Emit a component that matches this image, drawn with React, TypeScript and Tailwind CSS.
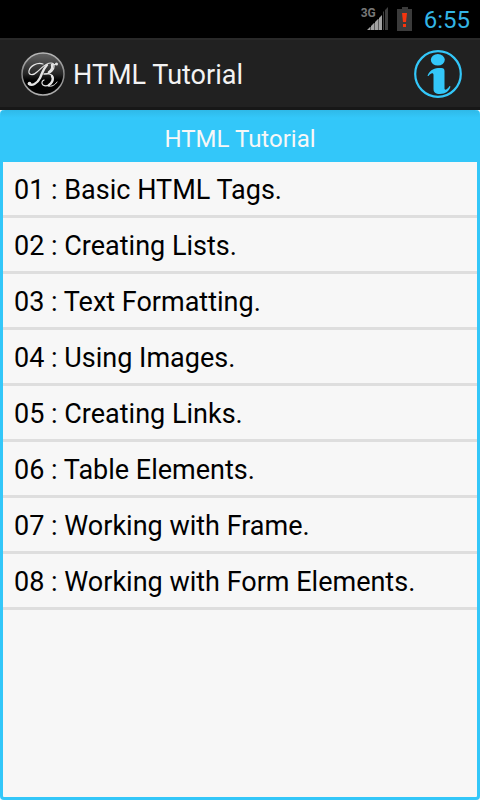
const lessons = [
  'Basic HTML Tags.',
  'Creating Lists.',
  'Text Formatting.',
  'Using Images.',
  'Creating Links.',
  'Table Elements.',
  'Working with Frame.',
  'Working with Form Elements.',
];

function SignalIcon() {
  return (
    <svg className="h-7 w-7" viewBox="0 0 28 28" aria-hidden="true">
      <path d="M6 25h3v-3zM10 25h3v-7l-3 3zM14 25h3V14l-3 3zM18 25h3V10l-3 3z" fill="#a3a3a3" />
      <path d="M9 22h1v3H9zM13 18h1v7h-1zM17 14h1v11h-1z" fill="#5c5c5c" />
      <path d="M22 25V7l1-1v19zM24 25V5l3-3v23z" fill="#3f3f3f" />
    </svg>
  );
}

function BatteryIcon() {
  return (
    <svg className="h-6 w-4" viewBox="0 0 16 24" aria-hidden="true">
      <path d="M5 0h6v2h4v22H0V2h5z" fill="#3b3b3b" />
      <path d="M5 6h5l-1 9H6z" fill="#f6350e" />
      <path d="M6 17h3v3H6z" fill="#f6350e" />
    </svg>
  );
}

// Round badge with a script monogram
function Logo() {
  return (
    <svg className="h-12 w-12" viewBox="0 0 48 48" fill="none" aria-hidden="true">
      <defs>
        <linearGradient id="badge" x1="0" y1="0" x2="0" y2="1">
          <stop offset="0" stopColor="#656565" />
          <stop offset="0.5" stopColor="#242424" />
          <stop offset="0.65" stopColor="#000" />
          <stop offset="1" stopColor="#050505" />
        </linearGradient>
        <linearGradient id="rim" x1="0" y1="0" x2="0" y2="1">
          <stop offset="0" stopColor="#b8b8b8" />
          <stop offset="0.5" stopColor="#858585" />
          <stop offset="1" stopColor="#b0b0b0" />
        </linearGradient>
      </defs>
      <circle cx="24" cy="24" r="21" fill="url(#badge)" stroke="url(#rim)" strokeWidth="1.5" />
      <g stroke="#e4e4e4" strokeLinecap="round" strokeLinejoin="round">
        <path d="M24 14c-6-2-13 2-14 7-1 4 4 5 8 1 5-4 8-9 14-9 4 0 4 5 1 8-2 2-5 3-8 3" strokeWidth="1.2" />
        <path d="M25 24c6-1 10 1 9 6-1 5-7 7-10 5-2-2-1-4 1-5" strokeWidth="1.2" />
        <path d="M28 15c-4 4-5 9-7 13-3 6-8 8-11 6" strokeWidth="2.4" />
        <path d="M33 15c1 3-1 6-3 7M33 26c2 3 0 7-3 9" strokeWidth="2.4" />
        <path d="M29 36c4 1 7-1 9-4M34 15l3-1" strokeWidth="1" />
      </g>
      <circle cx="10.500" cy="33.500" r="1.800" fill="#e4e4e4" />
      <circle cx="37.500" cy="14" r="1.500" fill="#e4e4e4" />
    </svg>
  );
}

function InfoIcon() {
  return (
    <svg className="h-12 w-12" viewBox="0 0 48 48" aria-hidden="true">
      <circle cx="24" cy="24" r="22.8" fill="none" stroke="#33c7f9" strokeWidth="2.2" />
      <ellipse cx="23.8" cy="9.8" rx="7" ry="5.8" fill="#33c7f9" />
      <path
        d="M13.5 26C15 21 19 18.500 24 18h3.500q3 0 3 3v17.500c0 2 2.500 1.500 5-2.500l1 .5C35.500 41 31.500 44 26 44c-4.500 0-6.500-1.500-6.500-5V25c0-2.500-2.500-2.500-5 1z"
        fill="#33c7f9"
      />
    </svg>
  );
}

function StatusBar() {
  return (
    <div className="flex h-[38px] items-center justify-end bg-black pr-[10px]">
      <div className="relative mr-2">
        <SignalIcon />
        <span className="absolute top-0.5 left-0 text-xs leading-3 font-bold text-[#777777]">3G</span>
      </div>
      <BatteryIcon />
      <time className="ml-[11px] pt-0.5 text-2xl leading-8 text-[#33b5e5]">6:55</time>
    </div>
  );
}

export default function App() {
  return (
    <div className="flex min-h-screen flex-col bg-[#f7f7f7] font-['Roboto',sans-serif]">
      <StatusBar />
      <header className="flex h-[72px] items-center border-t-2 border-b-3 border-t-[#292929] border-b-[#171717] bg-[#212121] pr-[18px] pl-[19px]">
        <Logo />
        <h1 className="ml-1.5 flex-1 pt-0.5 text-[27px] leading-8 text-[#f3f3f3]">HTML Tutorial</h1>
        <button type="button" aria-label="Info">
          <InfoIcon />
        </button>
      </header>
      <main className="flex flex-1 flex-col rounded-sm border-3 border-t-0 border-[#33c7f9] bg-[#f7f7f7]">
        <h2 className="-mx-0.5 h-[52px] rounded-t-sm bg-linear-to-b from-[#2fb9e8] to-[#33c7f9] to-15% pt-[13px] text-center text-2xl leading-8 text-[#f7f7f7]">
          HTML Tutorial
        </h2>
        <ul>
          {lessons.map((title, i) => (
            <li key={title} className="border-b-3 border-[#dedede]">
              <a href={`#lesson-${i + 1}`} className="block h-[53px] px-[11px] pt-3 text-[27px] leading-8 text-black">
                {String(i + 1).padStart(2, '0')} : {title}
              </a>
            </li>
          ))}
        </ul>
      </main>
    </div>
  );
}
